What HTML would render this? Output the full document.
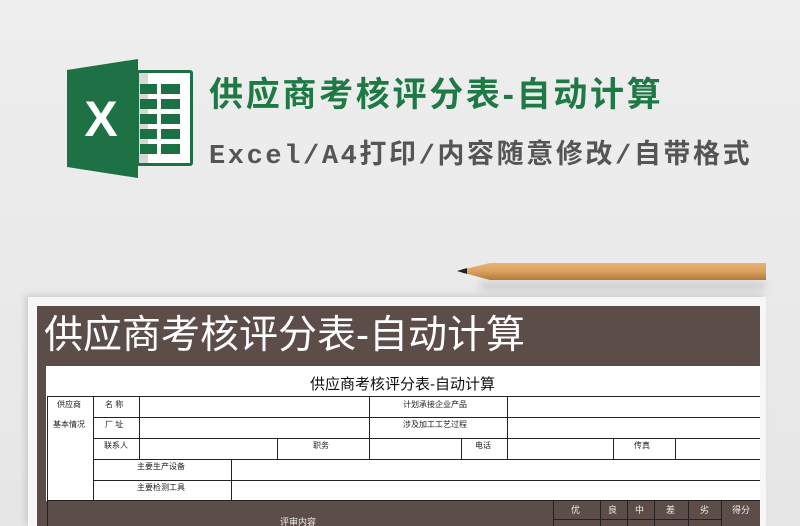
<!DOCTYPE html>
<html><head><meta charset="utf-8"><style>
*{margin:0;padding:0;box-sizing:border-box}
html,body{width:800px;height:526px;overflow:hidden}
body{background:linear-gradient(#eeeeee,#e6e6e6);position:relative;font-family:"Liberation Sans","Noto Sans CJK SC",sans-serif}
.a{position:absolute}
.h{position:absolute;height:1px;background:#222}
.v{position:absolute;width:1px;background:#222}
.t{position:absolute;font-size:8px;color:#222;white-space:nowrap}
.w{position:absolute;font-size:9px;color:#eee;white-space:nowrap}
</style></head><body>
<svg class="a" style="left:0;top:0" width="800" height="200">
<rect x="136" y="70" width="57" height="96" rx="3" fill="#1d7044"/>
<rect x="139" y="73" width="51" height="90" fill="#fff"/>
<rect x="139" y="73" width="9" height="90" fill="#d8d8d8"/>
<g fill="#1d7044">
<rect x="140" y="84" width="17" height="10"/><rect x="161" y="84" width="19" height="10"/>
<rect x="140" y="99" width="17" height="10"/><rect x="161" y="99" width="19" height="10"/>
<rect x="140" y="114" width="17" height="10"/><rect x="161" y="114" width="19" height="10"/>
<rect x="140" y="129" width="17" height="10"/><rect x="161" y="129" width="19" height="10"/>
<rect x="140" y="144" width="17" height="10"/><rect x="161" y="144" width="19" height="10"/>
</g>
<polygon points="67,70 138,59 138,178 67,167" fill="#1e7145"/>
<text x="101" y="136" font-family="Liberation Sans" font-weight="bold" font-size="50" fill="#fff" text-anchor="middle">X</text>
<text x="209" y="106" font-family="Liberation Sans,Noto Sans CJK SC,sans-serif" font-weight="bold" font-size="34" letter-spacing="2.7" fill="#1e7a45">供应商考核评分表-自动计算</text>
<text x="209" y="163" font-family="Liberation Mono,Noto Sans CJK SC,monospace" font-weight="bold" font-size="27" letter-spacing="2.6" fill="#555">Excel/A4打印/内容随意修改/自带格式</text>
</svg>
<!-- paper -->
<div class="a" style="left:28px;top:297px;width:738px;height:229px;background:#f7f7f7;box-shadow:-3px -2px 6px rgba(0,0,0,.12)"></div>
<div class="a" style="left:37px;top:306px;width:723px;height:220px;background:#5d4d48"></div>
<div class="a" style="left:46px;top:366px;width:714px;height:135px;background:#fff"></div>
<div class="a" style="left:44px;top:313px;font-size:39px;color:#fff;line-height:46px;white-space:nowrap">供应商考核评分表-自动计算</div>
<div class="a" style="left:310px;top:373px;font-size:15px;color:#111;white-space:nowrap">供应商考核评分表-自动计算</div>
<!-- pencil -->
<div class="a" style="left:480px;top:282px;width:285px;height:8px;background:rgba(0,0,0,.12);filter:blur(4px)"></div>
<svg class="a" style="left:455px;top:260px" width="315" height="24">
<defs><linearGradient id="p" x1="0" y1="0" x2="0" y2="1"><stop offset="0" stop-color="#e7b274"/><stop offset=".5" stop-color="#d9a15c"/><stop offset="1" stop-color="#b07a3a"/></linearGradient></defs>
<polygon points="2,11 35,3 311,3 311,20 35,20" fill="url(#p)"/>
<polygon points="2,11 12,8 12,14" fill="#222"/>
</svg>
<!-- table -->
<div class="h" style="left:47px;top:396px;width:713px"></div>
<div class="h" style="left:93px;top:417px;width:667px"></div>
<div class="h" style="left:93px;top:438px;width:667px"></div>
<div class="h" style="left:93px;top:459px;width:667px"></div>
<div class="h" style="left:93px;top:480px;width:667px"></div>
<div class="h" style="left:47px;top:500px;width:713px"></div>
<div class="v" style="left:47px;top:396px;height:105px"></div>
<div class="v" style="left:93px;top:396px;height:105px"></div>
<div class="v" style="left:139px;top:396px;height:63px"></div>
<div class="v" style="left:369px;top:396px;height:63px"></div>
<div class="v" style="left:507px;top:396px;height:63px"></div>
<div class="v" style="left:277px;top:438px;height:21px"></div>
<div class="v" style="left:461px;top:438px;height:21px"></div>
<div class="v" style="left:613px;top:438px;height:21px"></div>
<div class="v" style="left:675px;top:438px;height:21px"></div>
<div class="v" style="left:231px;top:459px;height:42px"></div>
<div class="t" style="left:57px;top:399px">供应商</div>
<div class="t" style="left:53px;top:419px">基本情况</div>
<div class="t" style="left:105px;top:399px">名 称</div>
<div class="t" style="left:105px;top:419px">厂 址</div>
<div class="t" style="left:104px;top:440px">联系人</div>
<div class="t" style="left:403px;top:399px">计划承接企业产品</div>
<div class="t" style="left:403px;top:419px">涉及加工工艺过程</div>
<div class="t" style="left:313px;top:440px">职务</div>
<div class="t" style="left:475px;top:440px">电话</div>
<div class="t" style="left:634px;top:440px">传真</div>
<div class="t" style="left:137px;top:461px">主要生产设备</div>
<div class="t" style="left:137px;top:482px">主要检测工具</div>
<!-- bottom header -->
<div class="a" style="left:47px;top:501px;width:1px;height:25px;background:#222"></div>
<div class="a" style="left:553px;top:501px;width:1px;height:25px;background:#222"></div>
<div class="a" style="left:600px;top:501px;width:1px;height:25px;background:#222"></div>
<div class="a" style="left:627px;top:501px;width:1px;height:25px;background:#222"></div>
<div class="a" style="left:654px;top:501px;width:1px;height:25px;background:#222"></div>
<div class="a" style="left:688px;top:501px;width:1px;height:25px;background:#222"></div>
<div class="a" style="left:721px;top:501px;width:1px;height:25px;background:#222"></div>
<div class="a" style="left:553px;top:519px;width:168px;height:1px;background:#222"></div>
<div class="w" style="left:571px;top:503px">优</div>
<div class="w" style="left:608px;top:503px">良</div>
<div class="w" style="left:635px;top:503px">中</div>
<div class="w" style="left:666px;top:503px">差</div>
<div class="w" style="left:700px;top:503px">劣</div>
<div class="w" style="left:732px;top:503px">得分</div>
<div class="w" style="left:280px;top:515px">评审内容</div>
</body></html>
